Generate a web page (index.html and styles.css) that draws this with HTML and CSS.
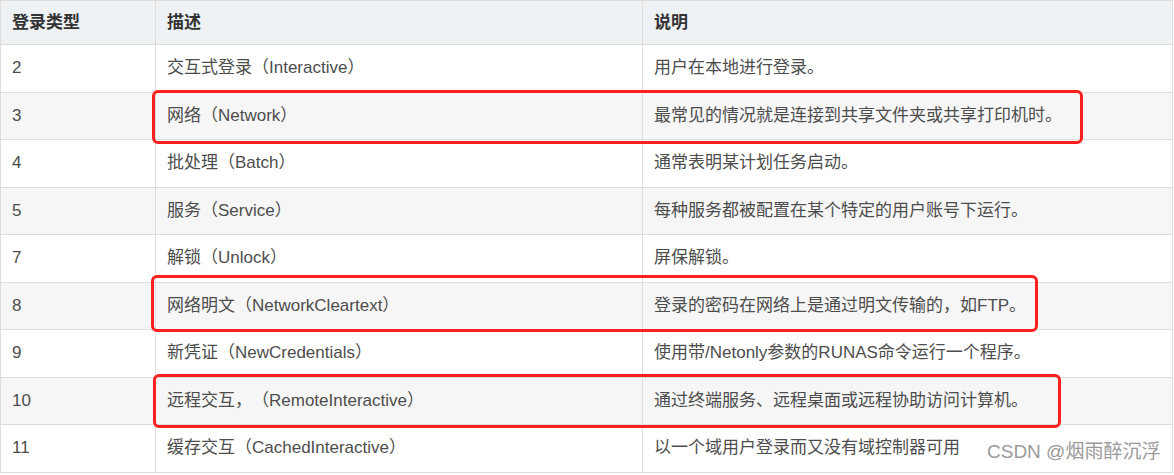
FILE: index.html
```html
<!DOCTYPE html>
<html lang="zh-CN">
<head>
<meta charset="utf-8">
<title>登录类型</title>
<link rel="stylesheet" href="styles.css">
</head>
<body>
<div class="wrap">
  <table class="logon">
    <colgroup>
      <col class="c1"><col class="c2"><col class="c3">
    </colgroup>
    <thead>
      <tr><th>登录类型</th><th>描述</th><th>说明</th></tr>
    </thead>
    <tbody>
      <tr><td>2</td><td>交互式登录（Interactive）</td><td>用户在本地进行登录。</td></tr>
      <tr><td>3</td><td>网络（Network）</td><td>最常见的情况就是连接到共享文件夹或共享打印机时。</td></tr>
      <tr><td>4</td><td>批处理（Batch）</td><td>通常表明某计划任务启动。</td></tr>
      <tr><td>5</td><td>服务（Service）</td><td>每种服务都被配置在某个特定的用户账号下运行。</td></tr>
      <tr><td>7</td><td>解锁（Unlock）</td><td>屏保解锁。</td></tr>
      <tr><td>8</td><td>网络明文（NetworkCleartext）</td><td>登录的密码在网络上是通过明文传输的，如FTP。</td></tr>
      <tr><td>9</td><td>新凭证（NewCredentials）</td><td>使用带/Netonly参数的RUNAS命令运行一个程序。</td></tr>
      <tr><td>10</td><td>远程交互，（RemoteInteractive）</td><td>通过终端服务、远程桌面或远程协助访问计算机。</td></tr>
      <tr><td>11</td><td>缓存交互（CachedInteractive）</td><td>以一个域用户登录而又没有域控制器可用</td></tr>
    </tbody>
  </table>
  <div class="mark mark-1"></div>
  <div class="mark mark-2"></div>
  <div class="mark mark-3"></div>
  <div class="watermark">CSDN @烟雨醉沉浮</div>
</div>
</body>
</html>
```

FILE: styles.css
```css
html, body {
  margin: 0;
  padding: 0;
  background: #ffffff;
}
body {
  font-family: "Liberation Sans", "Noto Sans CJK SC", sans-serif;
  font-size: 17px;
  color: #4d4d4d;
  text-spacing-trim: space-all;
}
.wrap {
  position: relative;
  width: 1174px;
  height: 475px;
  overflow: hidden;
}
.logon {
  border-collapse: collapse;
  table-layout: fixed;
  width: 1172px;
}
.c1 { width: 155px; }
.c2 { width: 487px; }
.c3 { width: 530px; }
.logon th,
.logon td {
  border: 1px solid #dddddd;
  padding: 0 11px;
  text-align: left;
  vertical-align: middle;
  white-space: nowrap;
  line-height: 24px;
}
.logon th {
  height: 43px;
  background: #eff2f5;
  color: #333333;
  font-weight: bold;
}
.logon td {
  height: 46.5px;
}
.logon tbody tr:nth-child(even) td {
  background: #f6f6f6;
}
.mark {
  position: absolute;
  border: 3px solid #ff1f1f;
  border-radius: 6px;
  box-sizing: border-box;
}
.mark-1 { left: 152px; top: 90px; width: 931px; height: 54px; }
.mark-2 { left: 151px; top: 275px; width: 887px; height: 57px; }
.mark-3 { left: 153px; top: 374px; width: 908px; height: 54px; }
.watermark {
  position: absolute;
  left: 987px;
  top: 440px;
  font-size: 19px;
  line-height: 24px;
  color: #9a9a9a;
  text-shadow: 0 0 2px #ffffff;
  white-space: nowrap;
}
```
